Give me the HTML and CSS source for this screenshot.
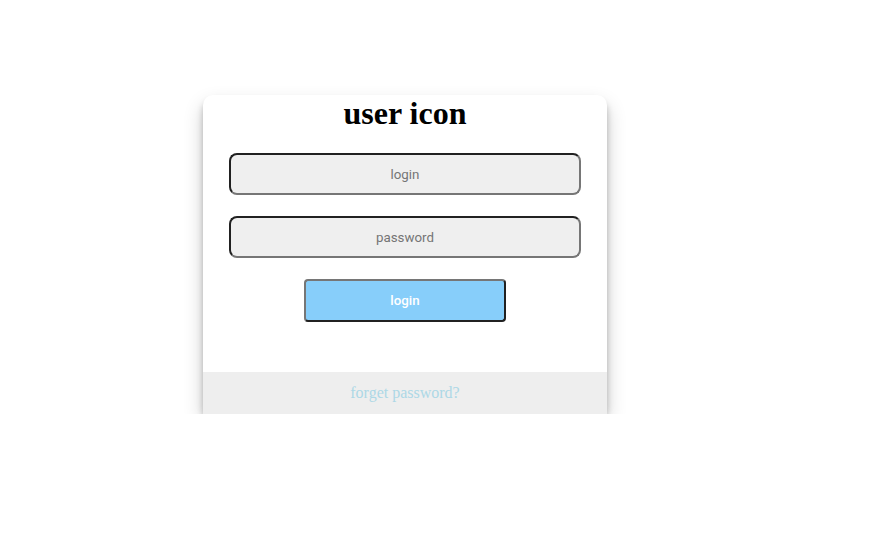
FILE: index.html
```html
<!DOCTYPE html>
<html>
<head>
<meta charset="utf-8">
<link rel="stylesheet" href="styles.css">
</head>
<body>
<div class="page">
  <div class="card">
    <h1 class="title">user icon</h1>
    <form class="form">
      <input class="field" type="text" placeholder="login">
      <input class="field" type="password" placeholder="password">
      <button class="submit" type="button">login</button>
    </form>
    <div class="footer">forget password?</div>
  </div>
</div>
</body>
</html>
```
FILE: styles.css
```css
html, body {
  margin: 0;
  padding: 0;
  background: #ffffff;
}
.page {
  display: flex;
  padding: 95px 0 0 203px;
  font-family: "Liberation Serif", serif;
}
.card {
  width: 404px;
  background: #ffffff;
  border-radius: 10px;
  box-shadow: 0 10px 20px rgba(0,0,0,0.19), 0 6px 6px rgba(0,0,0,0.23);
  display: flex;
  flex-direction: column;
}
.title {
  margin: 0;
  font-family: "Liberation Serif", serif;
  font-size: 32px;
  font-weight: bold;
  text-align: center;
  color: #000;
}
.form {
  display: flex;
  flex-direction: column;
  align-items: center;
  gap: 21px;
  padding: 21px 26px 0;
  margin-bottom: 50px;
}
.field {
  box-sizing: border-box;
  width: 352px;
  height: 42px;
  border: 2px inset #767676;
  border-radius: 8px;
  background: #efefef;
  font-family: Roboto, sans-serif;
  font-size: 13.333px;
  text-align: center;
  color: #000;
  outline: none;
}
.field::placeholder {
  color: #757575;
}
.submit {
  box-sizing: border-box;
  width: 202px;
  height: 43px;
  border: 2px outset #767676;
  border-radius: 4px;
  background: #87cefa;
  color: #ffffff;
  font-family: Roboto, sans-serif;
  font-size: 13.333px;
  font-weight: 500;
}
.footer {
  height: 42px;
  background: #eeeeee;
  color: #add8e6;
  font-size: 16px;
  display: flex;
  align-items: center;
  justify-content: center;
}
```
